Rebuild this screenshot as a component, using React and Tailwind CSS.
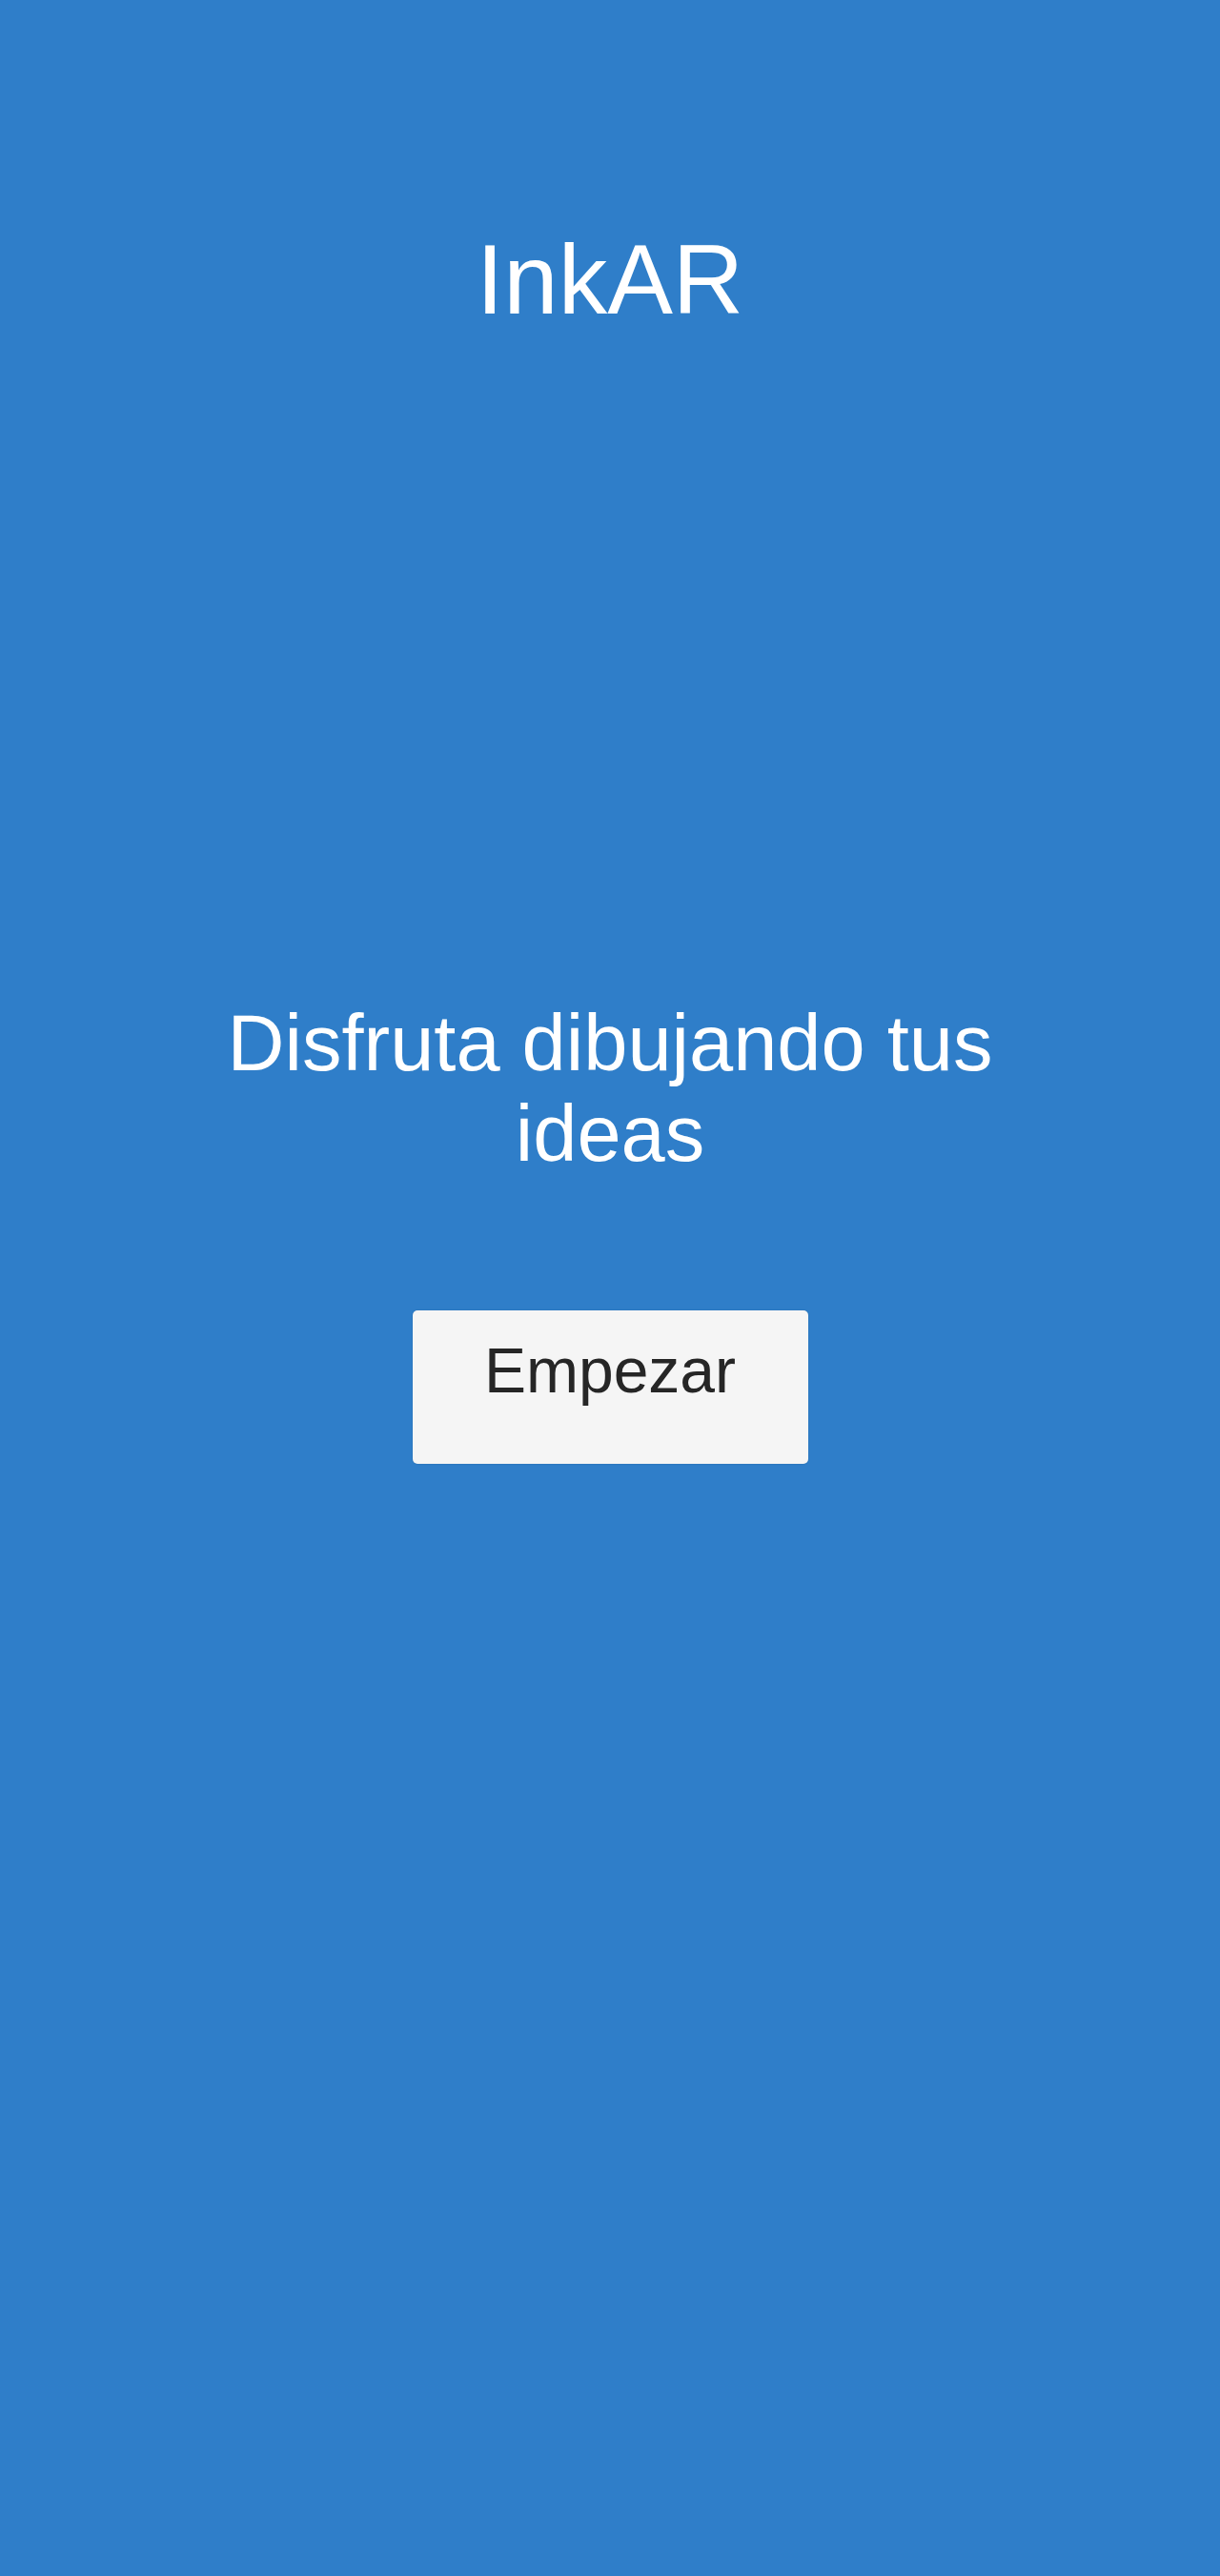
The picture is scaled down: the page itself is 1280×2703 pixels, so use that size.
export default function App() {
  return (
    <div
      className="min-h-[2703px] w-full bg-[#2f7ec9] flex flex-col items-center"
      style={{ fontFamily: '"Liberation Sans", Arial, sans-serif' }}
    >
      <h1 className="mt-[242px] text-[103px] leading-none text-white font-normal">
        InkAR
      </h1>

      <p className="mt-[702px] w-[880px] text-center text-[83px] leading-[95px] text-white">
        Disfruta dibujando tus ideas
      </p>

      <button className="mt-[138px] w-[415px] h-[161px] pt-[30px] flex justify-center items-start rounded-[5px] bg-[#f5f5f5] text-[#262626] text-[66px] leading-none shadow-[0_0_2px_rgba(0,0,0,0.15)]">
        Empezar
      </button>
    </div>
  );
}
